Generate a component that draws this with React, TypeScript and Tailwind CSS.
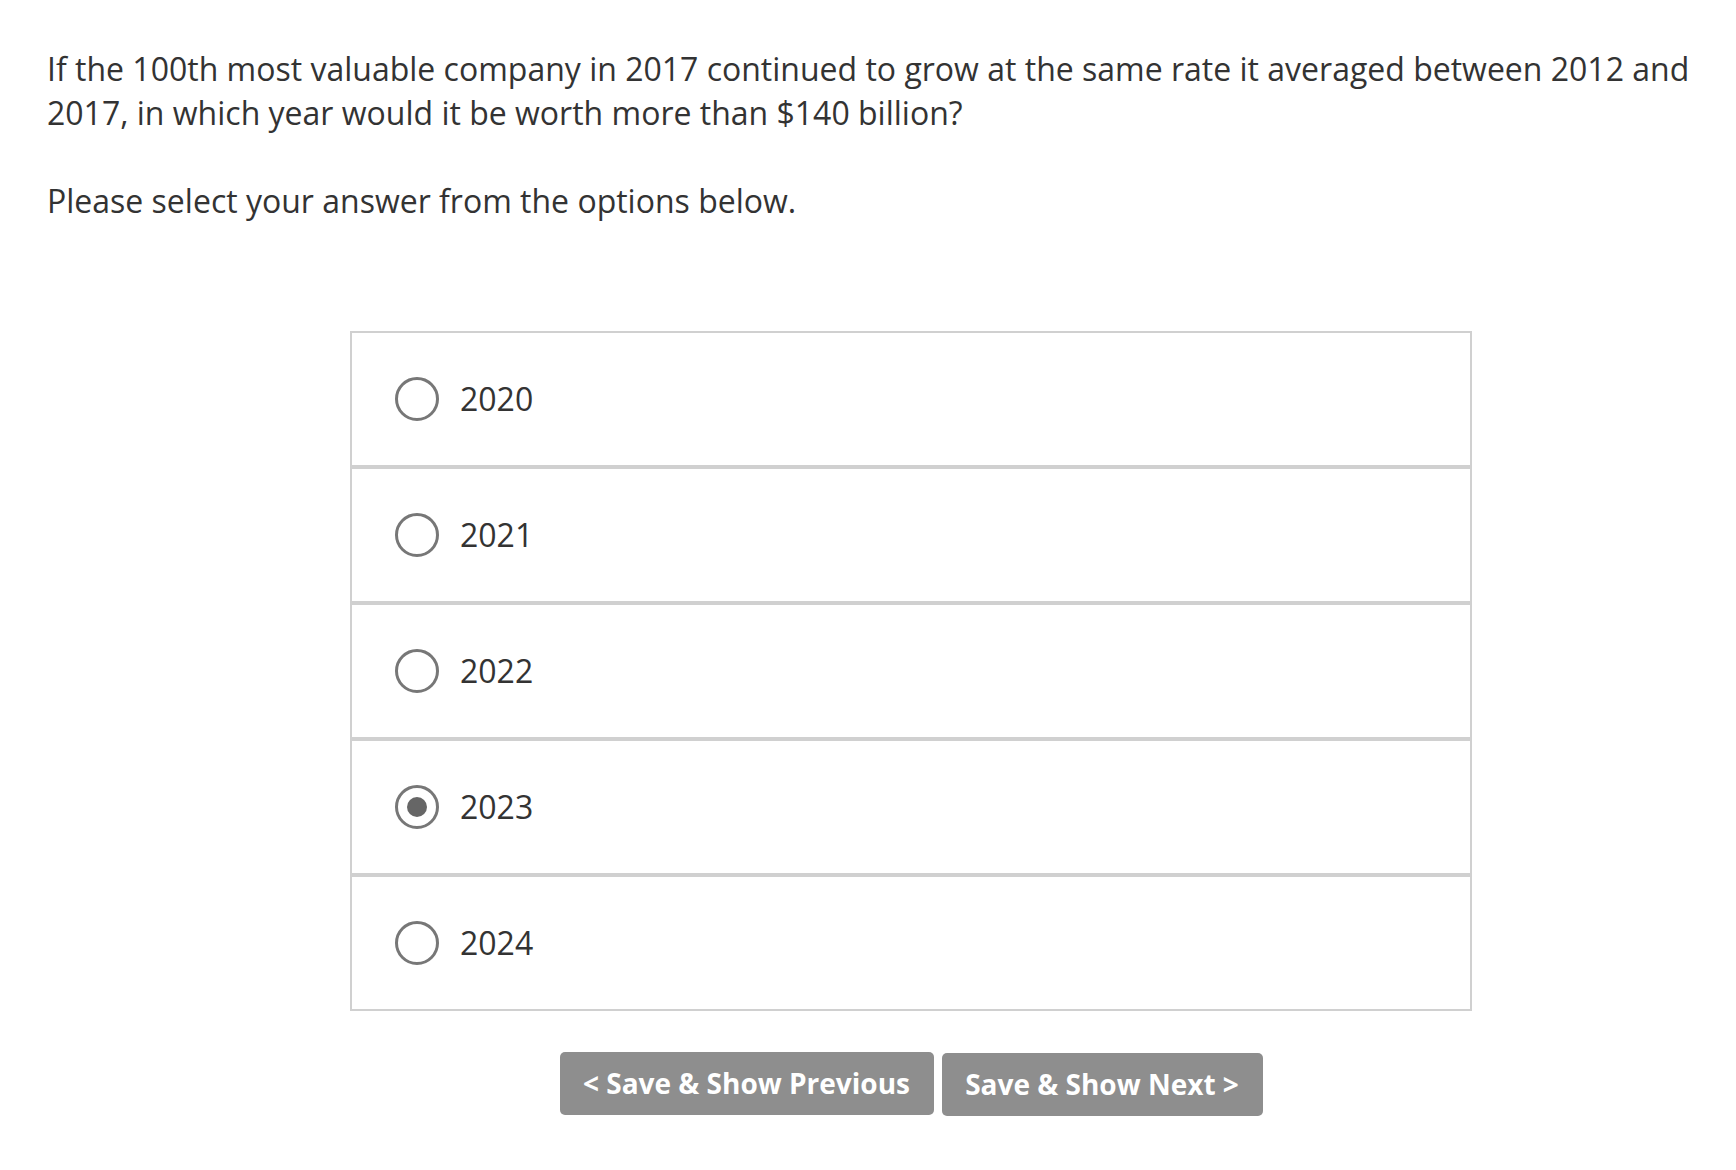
const options = ["2020", "2021", "2022", "2023", "2024"];
const selected = "2023";

export default function App() {
  return (
    <main
      className="min-h-screen bg-white pl-[47px] pr-[24px] pt-[47px] text-[#333333]"
      style={{ fontFamily: '"Open Sans", "Liberation Sans", sans-serif' }}
    >
      <p className="text-[32px] leading-[44px]">
        If the 100th most valuable company in 2017 continued to grow at the same rate it averaged between 2012 and
        2017, in which year would it be worth more than $140 billion?
      </p>
      <p className="mt-[44px] text-[32px] leading-[44px]">Please select your answer from the options below.</p>

      <div className="ml-[303px] mt-[108px] w-[1122px]">
        <div className="flex flex-col">
          {options.map((year) => (
            <label
              key={year}
              className="flex h-[136px] cursor-pointer items-center border-2 border-[#d0d0d0] bg-white pl-[43px]"
            >
              <span className="flex h-[44px] w-[44px] items-center justify-center rounded-full border-[3px] border-[#777777]">
                {year === selected && <span className="h-[20px] w-[20px] rounded-full bg-[#666666]" />}
              </span>
              <span className="ml-[21px] text-[32px] leading-none">{year}</span>
            </label>
          ))}
        </div>

        <div className="mt-[41px] flex justify-center gap-[8px]">
          <button
            type="button"
            className="h-[63px] w-[374px] rounded-[5px] bg-[#8e8e8e] pb-[2px] text-[28px] font-bold text-white"
          >
            &lt; Save &amp; Show Previous
          </button>
          <button
            type="button"
            className="mt-px h-[63px] w-[321px] rounded-[5px] bg-[#8e8e8e] pb-[2px] text-[28px] font-bold text-white"
          >
            Save &amp; Show Next &gt;
          </button>
        </div>
      </div>
    </main>
  );
}
